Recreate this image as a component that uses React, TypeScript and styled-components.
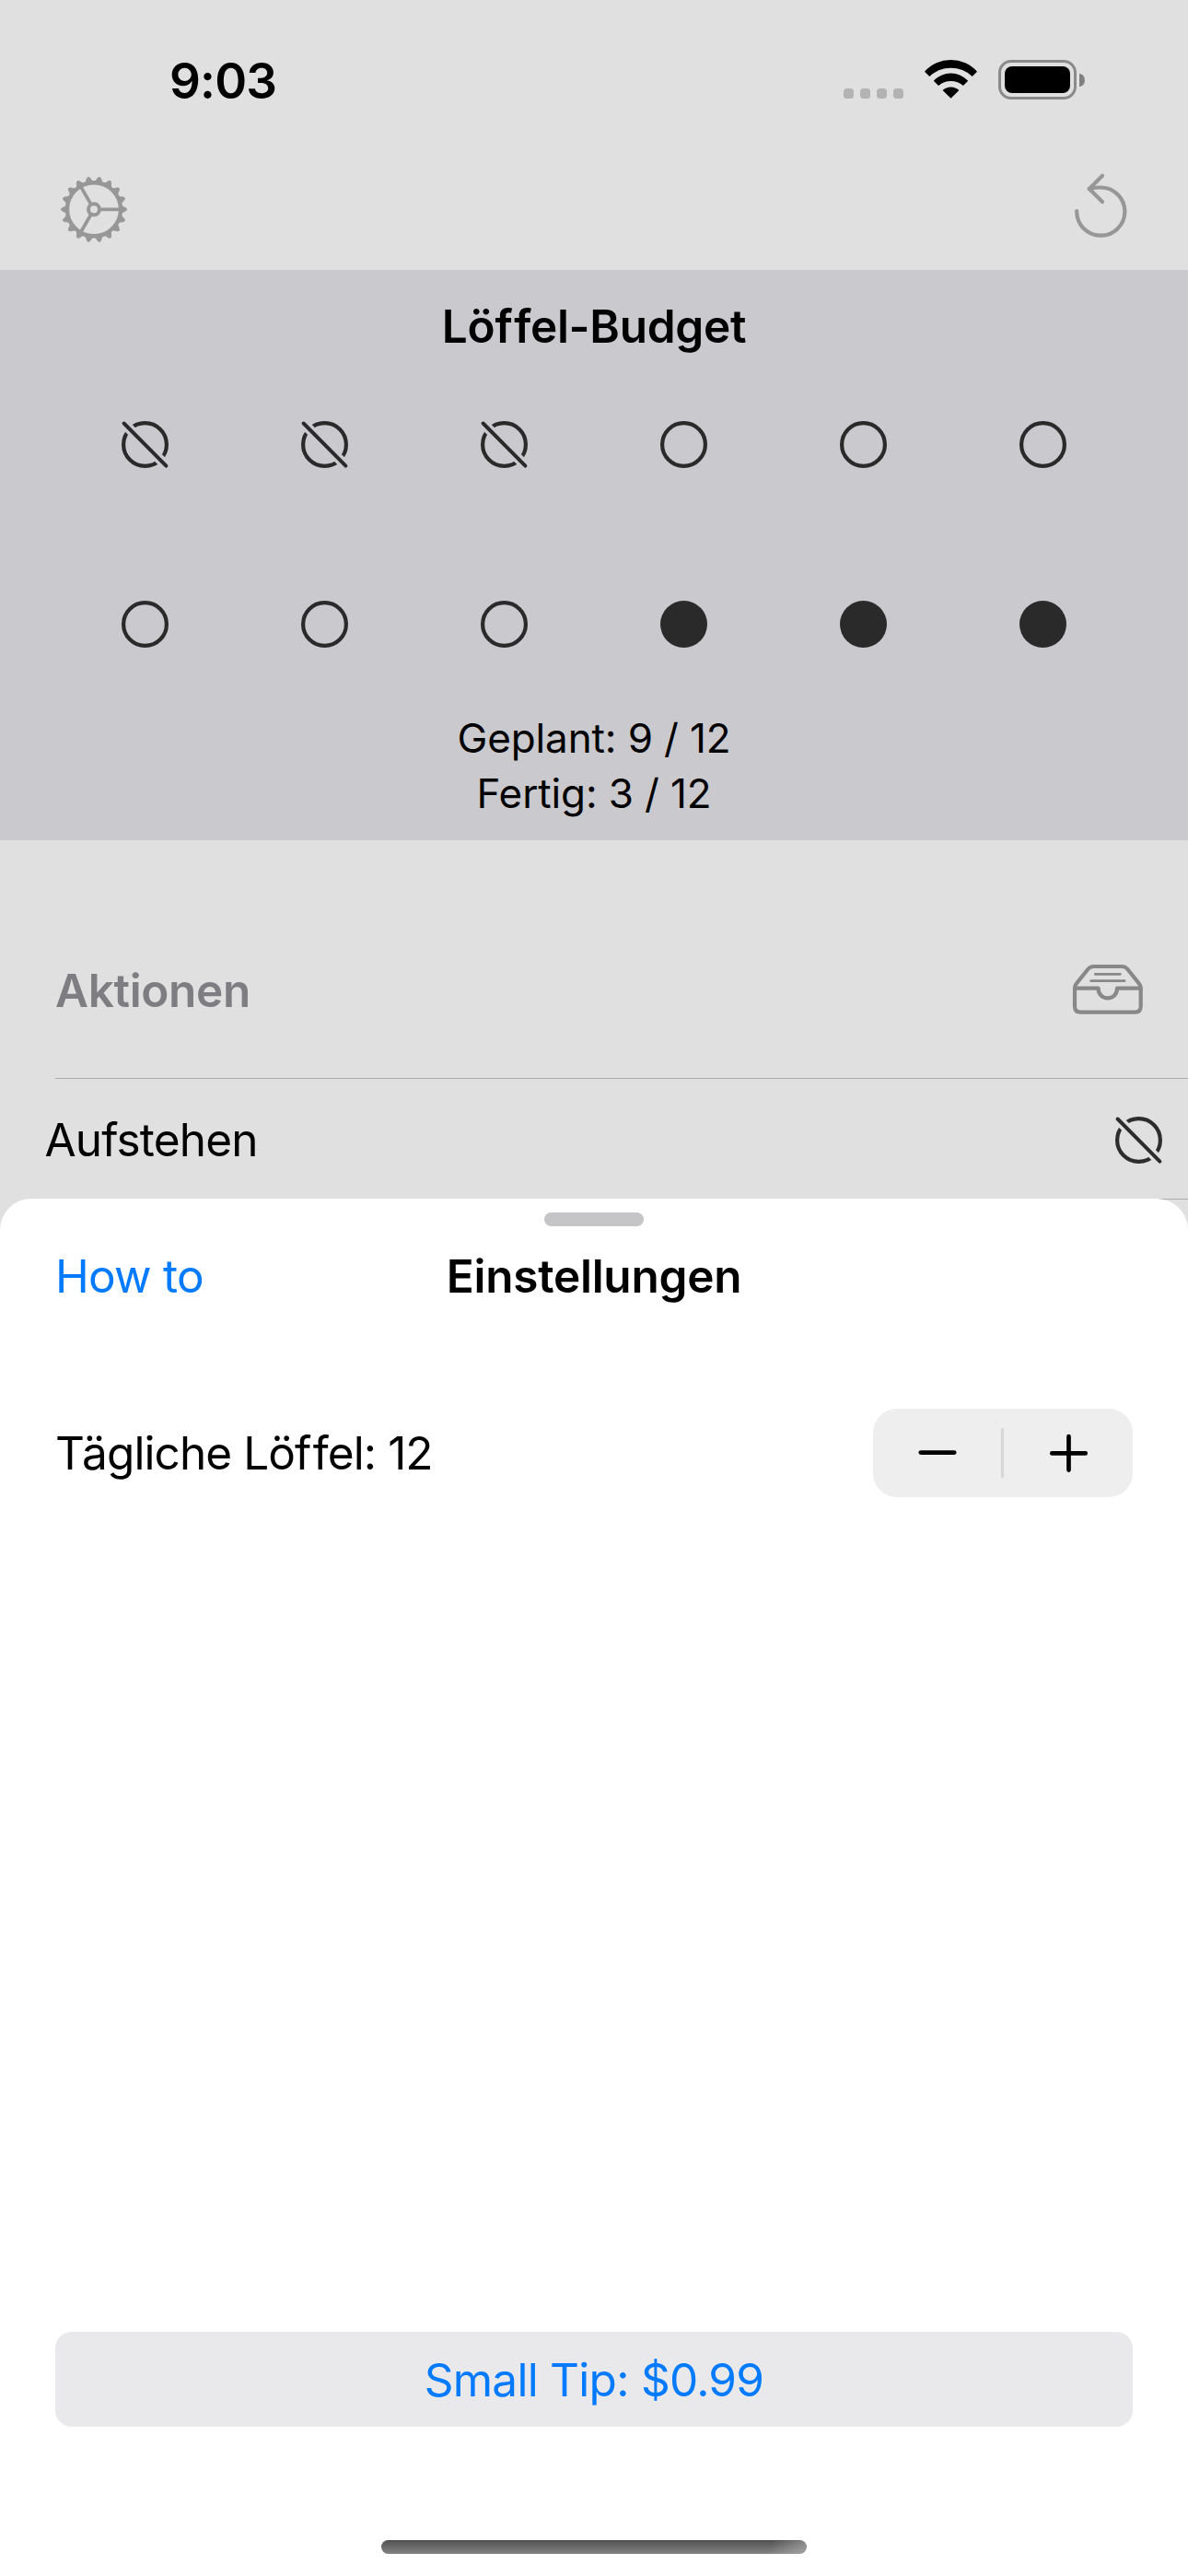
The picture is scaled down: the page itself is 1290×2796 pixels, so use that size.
import React from 'react';
import styled, { createGlobalStyle } from 'styled-components';

const GlobalStyle = createGlobalStyle`
  *, *::before, *::after { box-sizing: border-box; }
  body { margin: 0; background: #fff; }
  svg { display: block; flex: none; overflow: visible; }
  button { border: 0; padding: 0; margin: 0; background: none; font: inherit; color: inherit; }
`;

const Screen = styled.div`
  position: relative;
  width: 1290px;
  height: 2796px;
  overflow: hidden;
  background: #e0e0e0;
  color: #000;
  font-family: Inter, 'Liberation Sans', sans-serif;
`;

const Label = styled.span<{ $size?: number; $weight?: number; $color?: string; $track?: number }>`
  font-size: ${(p) => p.$size ?? 49.5}px;
  font-weight: ${(p) => p.$weight ?? 400};
  color: ${(p) => p.$color ?? '#000'};
  letter-spacing: ${(p) => p.$track ?? 0}px;
  line-height: 52px;
  white-space: nowrap;
`;

/* Opens the gap after the first letter of a double f. */
const Loose = styled.span`
  letter-spacing: 1.5px;
`;

const StatusBar = styled.header`
  display: flex;
  justify-content: space-between;
  align-items: center;
  height: 176px;
  padding: 0 112px 0 184px;
`;

const StatusIcons = styled.div`
  display: flex;
  align-items: flex-start;
  height: 46px;
`;

const Signal = styled.div`
  display: flex;
  gap: 7px;
  margin: 31px 23px 0 0;
`;

const SignalDot = styled.i`
  width: 11px;
  height: 11px;
  border-radius: 3.5px;
  background: #b3b3b3;
`;

const BatteryShell = styled.div`
  width: 85px;
  height: 43px;
  margin: 0 3px 0 23px;
  padding: 4px;
  border: 3px solid #8a8a8a;
  border-radius: 14px;
`;

const BatteryLevel = styled.div`
  height: 100%;
  border-radius: 8px;
  background: #000;
`;

const BatteryNub = styled.div`
  width: 6px;
  height: 14px;
  margin-top: 14.5px;
  border-radius: 0 100% 100% 0 / 0 50% 50% 0;
  background: #808080;
`;

const Toolbar = styled.nav`
  display: flex;
  justify-content: space-between;
  align-items: center;
  height: 117px;
  padding: 0 65px 15px;
`;

const Budget = styled.section`
  display: flex;
  flex-direction: column;
  align-items: center;
  height: 619px;
  padding-top: 35px;
  background: #cac9ce;
`;

const SpoonGrid = styled.div`
  display: grid;
  grid-template-columns: repeat(6, 195px);
  grid-auto-rows: 195px;
  place-items: center;
  margin-top: 5px;
`;

const Summary = styled.div`
  display: flex;
  flex-direction: column;
  align-items: center;
  gap: 8px;
`;

const ListHeader = styled.div`
  display: flex;
  justify-content: space-between;
  align-items: center;
  height: 191px;
  margin: 68px 0 0 60px;
  padding-right: 49px;
  border-bottom: 1px solid #acacad;

  svg { margin-bottom: 2px; }
`;

const ListRow = styled.div`
  display: flex;
  justify-content: space-between;
  align-items: center;
  height: 130px;
  padding: 3px 28px 0 48.5px;

  > span { margin-bottom: 2px; }
`;

const RowDivider = styled.div`
  height: 1px;
  margin-left: 60px;
  background: #acacad;
`;

const Sheet = styled.section`
  position: absolute;
  inset: 1301px 0 0 0;
  display: flex;
  flex-direction: column;
  padding: 15px 60px 24px;
  border-radius: 34px 34px 0 0;
  background: #fff;
`;

const Grabber = styled.div`
  align-self: center;
  width: 108px;
  height: 15px;
  border-radius: 8px;
  background: #c5c5c7;
`;

const SheetNav = styled.div`
  display: grid;
  grid-template-columns: 1fr auto 1fr;
  align-items: center;
  height: 108px;
`;

const SettingRow = styled.div`
  display: flex;
  justify-content: space-between;
  align-items: center;
  height: 96px;
  margin-top: 90px;
`;

const Stepper = styled.div`
  display: grid;
  grid-template-columns: 139px 3px 1fr;
  align-items: center;
  width: 282px;
  height: 96px;
  border-radius: 26px;
  background: #eee;
`;

const StepperSplit = styled.div`
  height: 54px;
  border-radius: 1.5px;
  background: #d6d6d6;
`;

const StepButton = styled.button`
  display: flex;
  justify-content: center;
`;

const TipButton = styled.button`
  display: flex;
  justify-content: center;
  align-items: center;
  height: 103px;
  margin-top: auto;
  border-radius: 18px;
  background: #e9e9eb;
`;

const HomeIndicator = styled.div`
  align-self: center;
  width: 462px;
  height: 15px;
  margin-top: 123px;
  border-radius: 8px;
  background:
    linear-gradient(110deg, transparent 91%, rgba(190, 190, 190, 0.55) 100%),
    linear-gradient(#515151, #838383);
`;

type SpoonState = 'done' | 'planned' | 'free';

function Spoon({ state, color = '#2a2a2a' }: { state: SpoonState; color?: string }) {
  return (
    <svg width="51" height="51" viewBox="-25.5 -25.5 51 51" fill="none" stroke={color} strokeWidth="4.2">
      {state === 'free' && <circle r="25.5" fill={color} stroke="none" />}
      {state === 'planned' && <circle r="23.4" />}
      {state === 'done' && (
        <>
          <mask id="slash-gap" maskUnits="userSpaceOnUse" x="-30" y="-30" width="60" height="60">
            <rect x="-30" y="-30" width="60" height="60" fill="#fff" stroke="none" />
            <path d="M-30-30 30 30" stroke="#000" strokeWidth="11" />
          </mask>
          <circle r="23.4" mask="url(#slash-gap)" />
          <path d="M-22.9-23 22.9 23.2" strokeWidth="4" strokeLinecap="round" />
        </>
      )}
    </svg>
  );
}

const TEETH = Array.from({ length: 18 }, (_, i) => i * 20);

function GearIcon() {
  return (
    <svg width="74" height="74" viewBox="-37 -37.3 74 74" fill="none" stroke="#979797">
      <circle r="29" strokeWidth="4.4" />
      <circle r="6" strokeWidth="4" />
      {[0, 120, 240].map((a) => (
        <path key={a} d="M7.5 0H28" strokeWidth="3.7" transform={`rotate(${a})`} />
      ))}
      {TEETH.map((a) => (
        <path
          key={a}
          d="M30-4 Q32-2.8 34.7-1.5 Q36.6 0 34.7 1.5 Q32 2.8 30 4Z"
          fill="#979797"
          strokeWidth="0.8"
          transform={`rotate(${a})`}
        />
      ))}
    </svg>
  );
}

function ResetIcon() {
  return (
    <svg width="58" height="74" viewBox="1167 190.3 58 74" fill="none" stroke="#979797" strokeWidth="4.2" strokeLinecap="round" strokeLinejoin="round">
      <path d="M1169.2 229.3A26.1 26.1 0 1 0 1195.3 203.8Q1188.5 203.8 1182.7 205.2" />
      <path d="M1197 191 1182.9 205.2 1197 219.4" />
    </svg>
  );
}

function WifiIcon() {
  return (
    <svg width="57" height="42" viewBox="0 0 57 42" fill="#000">
      <path d="M0 12.7A38.3 38.3 0 0 1 57 12.7L51.7 18A33.6 33.6 0 0 0 5.3 18Z" />
      <path d="M9.8 22.7A25.6 25.6 0 0 1 47.2 22.7L41.9 28.1A20.4 20.4 0 0 0 15.1 28.1Z" />
      <path d="M19.6 33A13 13 0 0 1 37.4 33L28.5 41.8Z" />
    </svg>
  );
}

function TrayIcon() {
  return (
    <svg width="76" height="54" viewBox="0 0 76 54" fill="none" stroke="#888" strokeWidth="4.2" strokeLinecap="round" strokeLinejoin="round">
      <path d="M2 26V45.2Q2 51.7 8.5 51.7H67.2Q73.7 51.7 73.7 45.2V25.5Q73.7 23 72 20.8L59.4 5Q57 2 53 2H22.7Q18.7 2 16.3 5L3.7 20.8Q2 23 2 25.5" />
      <path d="M2 25.7H27.6C27.6 32.4 32 36.4 37.8 36.4S48 32.4 48 25.7H73.7" />
      <path d="M24.3 10.3H51.3M19.7 17.7H56" strokeWidth="2.8" />
    </svg>
  );
}

function StepGlyph({ plus = false }: { plus?: boolean }) {
  return (
    <svg width="42" height="42" viewBox="-21 -21 42 42" stroke="#000" strokeWidth="4.7" strokeLinecap="round">
      {plus ? <path d="M-17.7.4H18.7M.5-17.8V18.6" /> : <path d="M-18.2-.4H18.2" />}
    </svg>
  );
}

const SPOONS: SpoonState[] = [
  'done', 'done', 'done', 'planned', 'planned', 'planned',
  'planned', 'planned', 'planned', 'free', 'free', 'free',
];

export default function App() {
  return (
    <Screen>
      <GlobalStyle />
      <StatusBar>
        <Label $size={53} $weight={600} $track={-0.8}>9:03</Label>
        <StatusIcons>
          <Signal>
            {[0, 1, 2, 3].map((i) => <SignalDot key={i} />)}
          </Signal>
          <WifiIcon />
          <BatteryShell><BatteryLevel /></BatteryShell>
          <BatteryNub />
        </StatusIcons>
      </StatusBar>
      <Toolbar>
        <GearIcon />
        <ResetIcon />
      </Toolbar>
      <Budget>
        <Label $weight={600} $track={-0.28}>Lö<Loose>f</Loose>fel-Budget</Label>
        <SpoonGrid>
          {SPOONS.map((state, i) => <Spoon key={i} state={state} />)}
        </SpoonGrid>
        <Summary>
          <Label $size={44} $track={-0.115}>Geplant: 9 / 12</Label>
          <Label $size={44} $track={-0.123}>Fertig: 3 / 12</Label>
        </Summary>
      </Budget>
      <ListHeader>
        <Label $weight={600} $track={-0.33} $color="#7e7d82">Aktionen</Label>
        <TrayIcon />
      </ListHeader>
      <ListRow>
        <Label $track={-0.85}>Aufstehen</Label>
        <Spoon state="done" color="#2d2d2d" />
      </ListRow>
      <RowDivider />
      <Sheet>
        <Grabber />
        <SheetNav>
          <Label $track={-0.74} $color="#007aff">How to</Label>
          <Label $weight={600} $track={-0.25}>Einstellungen</Label>
        </SheetNav>
        <SettingRow>
          <Label $track={-0.92}>Tägliche Lö<Loose>f</Loose>fel: 12</Label>
          <Stepper>
            <StepButton aria-label="minus"><StepGlyph /></StepButton>
            <StepperSplit />
            <StepButton aria-label="plus"><StepGlyph plus /></StepButton>
          </Stepper>
        </SettingRow>
        <TipButton>
          <Label $track={-0.73} $color="#007aff">Small Tip: $0.99</Label>
        </TipButton>
        <HomeIndicator />
      </Sheet>
    </Screen>
  );
}
